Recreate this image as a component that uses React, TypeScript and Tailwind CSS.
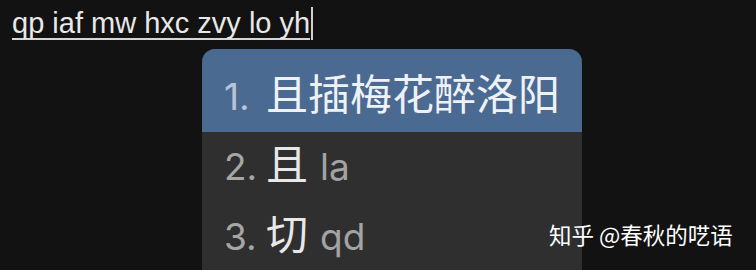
const CANDIDATES = [
  { n: '1.', word: '且插梅花醉洛阳', code: '' },
  { n: '2.', word: '且', code: 'la' },
  { n: '3.', word: '切', code: 'qd' },
]

export default function App() {
  return (
    <div className="relative w-[756px] h-[270px] overflow-hidden bg-[#121212]">
      {/* Composing text */}
      <div className="flex items-end pl-[12px] pt-[7px]">
        <span
          className="inline-block text-[29px] leading-none text-[#e8e8e8] border-b-2 border-[#d6d6d6] whitespace-pre"
          style={{ fontFamily: '"Liberation Sans", Arial, sans-serif' }}
        >
          qp iaf mw hxc zvy lo yh
        </span>
        <span className="inline-block w-[2px] h-[33px] bg-[#cfcfcf] ml-[1px]" />
      </div>

      {/* Candidate window */}
      <div className="mt-[9px] ml-[202px] w-[380px] h-[240px] rounded-t-[13px] overflow-hidden bg-[#2f2f2f]">
        {CANDIDATES.map((c, i) => (
          <div
            key={c.n}
            className={
              i === 0
                ? 'h-[83px] pt-[13px] pl-[22px] bg-[#4b6a91] whitespace-nowrap'
                : 'h-[70px] pl-[22px] whitespace-nowrap'
            }
            style={{ fontFamily: 'Inter, "Noto Sans", sans-serif' }}
          >
            <div className="text-[37px] leading-[70px]">
              <span
                className={
                  i === 0
                    ? 'inline-block w-[42px] leading-none text-[#b9c5d5]'
                    : 'inline-block w-[42px] leading-none text-[#a6a6a6]'
                }
              >
                {c.n}
              </span>
              <span
                className={
                  i === 0
                    ? 'text-[42px] leading-none text-[#eef2f7]'
                    : 'text-[42px] leading-none text-[#e8e8e8]'
                }
                style={{ fontFamily: '"Noto Sans CJK SC", sans-serif' }}
              >
                {c.word}
              </span>
              {c.code && (
                <span className="ml-[12px] leading-none text-[#a3a3a3]">{c.code}</span>
              )}
            </div>
          </div>
        ))}
      </div>

      {/* Watermark */}
      <div
        className="absolute left-[549px] top-[223px] text-[22.5px] leading-none text-white whitespace-pre"
        style={{ fontFamily: '"Noto Sans CJK SC", sans-serif' }}
      >
        知乎 @春秋的呓语
      </div>
    </div>
  )
}
